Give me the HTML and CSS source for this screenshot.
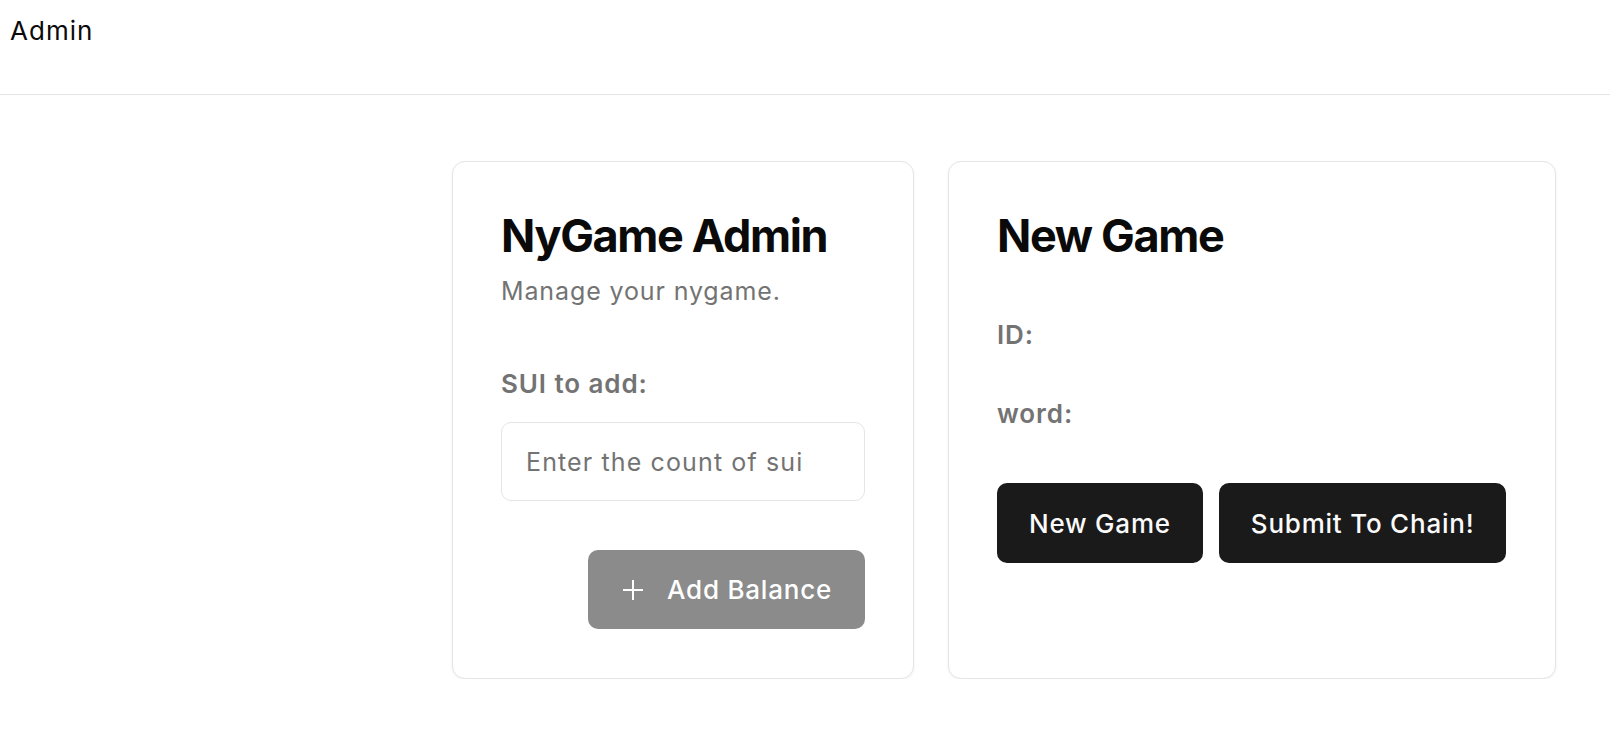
FILE: index.html
```html
<!DOCTYPE html>
<html lang="en">
<head>
<meta charset="utf-8">
<title>Admin</title>
<link rel="stylesheet" href="styles.css">
</head>
<body>
<header class="topbar">
  <div class="brand">Admin</div>
</header>
<main class="main">
  <section class="card card-admin">
    <div class="card-header">
      <h2 class="card-title">NyGame Admin</h2>
      <p class="card-desc">Manage your nygame.</p>
    </div>
    <div class="card-body">
      <label class="field-label" for="sui">SUI to add:</label>
      <input class="input" id="sui" type="text" placeholder="Enter the count of sui">
      <div class="actions-right">
        <button class="btn btn-muted" type="button" disabled>
          <svg class="icon-plus" width="20" height="20" viewBox="0 0 20 20" aria-hidden="true">
            <path d="M0 10h20M10 0v20" stroke="currentColor" stroke-width="2" fill="none"/>
          </svg>
          <span>Add Balance</span>
        </button>
      </div>
    </div>
  </section>
  <section class="card card-game">
    <div class="card-header">
      <h2 class="card-title">New Game</h2>
    </div>
    <div class="card-body">
      <div class="field-label label-id">ID:</div>
      <div class="field-label label-word">word:</div>
      <div class="actions">
        <button class="btn btn-dark" type="button">New Game</button>
        <button class="btn btn-dark" type="button">Submit To Chain!</button>
      </div>
    </div>
  </section>
</main>
</body>
</html>
```
FILE: styles.css
```css
* { box-sizing: border-box; }

html, body {
  margin: 0;
  padding: 0;
  background: #ffffff;
  font-family: Inter, "Noto Sans", "Liberation Sans", sans-serif;
  color: #0a0a0a;
}

.topbar {
  height: 95px;
  border-bottom: 1px solid #e5e5e5;
  padding: 16px 0 0 10px;
}

.brand {
  font-size: 26px;
  line-height: 30px;
  font-weight: 400;
  letter-spacing: 0.04em;
  color: #0a0a0a;
}

.main {
  display: flex;
  justify-content: flex-end;
  align-items: stretch;
  gap: 34px;
  padding: 66px 54px 0 0;
}

.card {
  border: 1px solid #e5e5e5;
  border-radius: 13px;
  background: #ffffff;
  box-shadow: 0 1px 3px rgba(0, 0, 0, 0.06);
  padding: 48px 48px 49px 48px;
  display: flex;
  flex-direction: column;
}

.card-admin { width: 462px; height: 518px; }
.card-game { width: 608px; }

.card-title {
  margin: 0;
  font-size: 45px;
  line-height: 52px;
  font-weight: 650;
  letter-spacing: -0.03em;
  color: #0a0a0a;
}

.card-desc {
  margin: 11px 0 0 0;
  font-size: 25px;
  line-height: 36px;
  letter-spacing: 0.035em;
  color: #737373;
}

.card-body {
  display: flex;
  flex-direction: column;
}

.field-label {
  display: block;
  font-size: 26px;
  line-height: 36px;
  font-weight: 600;
  letter-spacing: 0.035em;
  color: #737373;
}

.card-admin .field-label { margin-top: 57px; }

.input {
  margin-top: 20px;
  width: 100%;
  height: 79px;
  border: 1px solid #e5e5e5;
  border-radius: 10px;
  padding: 0 24px;
  font-family: inherit;
  font-size: 25px;
  letter-spacing: 0.045em;
  color: #0a0a0a;
  background: #ffffff;
  outline: none;
}

.input::placeholder { color: #737373; }

.actions-right {
  display: flex;
  justify-content: flex-end;
  margin-top: 49px;
}

.btn {
  display: inline-flex;
  align-items: center;
  justify-content: center;
  height: 80px;
  border: none;
  border-radius: 10px;
  font-family: inherit;
  font-size: 26px;
  font-weight: 500;
  letter-spacing: 0.03em;
  color: #fafafa;
  padding: 0 32px;
  cursor: pointer;
}

.btn-muted {
  width: 277px;
  height: 79px;
  background: #8b8b8b;
  color: #ffffff;
  gap: 24px;
  padding: 0 0 0 2px;
}

.icon-plus { display: block; flex: none; }

.btn-dark {
  background: #1a1a1a;
}

.label-id { margin-top: 55px; }
.label-word { margin-top: 43px; }

.actions {
  display: flex;
  gap: 16px;
  margin-top: 51px;
}
```
